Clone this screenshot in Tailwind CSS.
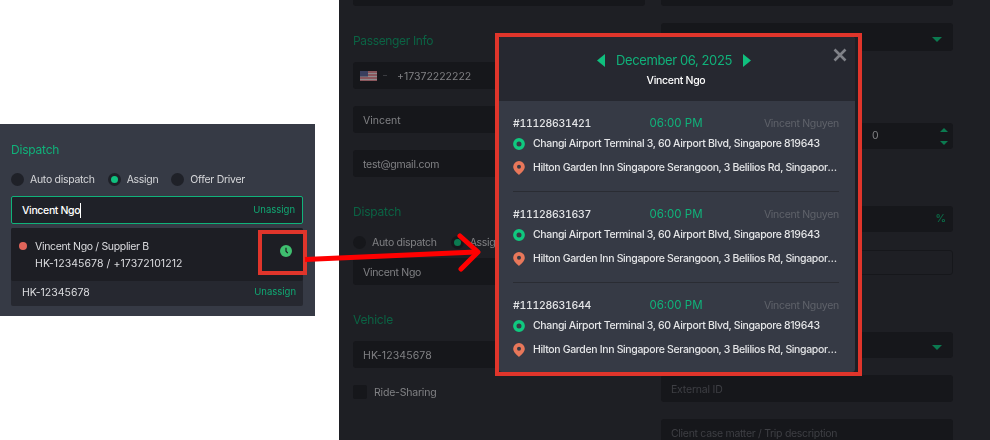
<!DOCTYPE html>
<html lang="en">
<head>
  <meta charset="UTF-8">
  <title>Dispatch assign</title>
  <script src="https://cdn.jsdelivr.net/npm/@tailwindcss/browser@4"></script>
</head>
<body class="bg-white font-['Inter',sans-serif]">
  <div class="relative flex h-[440px] w-[990px] overflow-hidden">

    <!-- Left: dispatch card -->
    <div class="w-[339px] shrink-0 pt-[124px]">
      <div class="h-[192px] w-[315px] bg-[#363a45] px-[11px] pt-[18px]">
        <h2 class="text-[12px] leading-[15px] tracking-[-0.2px] text-[#10b27a] blur-[0.3px]">Dispatch</h2>
        <div class="mt-[15px] flex h-[14px] items-center text-[10.5px] tracking-[-0.3px] text-[#d5d6d9]">
          <span class="h-[13px] w-[13px] rounded-full bg-[#1f2128]"></span>
          <span class="ml-[6px] mt-[2px] blur-[0.3px]">Auto dispatch</span>
          <span class="ml-[13px] flex h-[13px] w-[13px] items-center justify-center rounded-full bg-[#1f2128]"><span class="h-[7px] w-[7px] rounded-full bg-[#10c07e]"></span></span>
          <span class="ml-[6px] mt-[2px] blur-[0.3px]">Assign</span>
          <span class="ml-[13px] h-[13px] w-[13px] rounded-full bg-[#1f2128]"></span>
          <span class="ml-[6px] mt-[2px] blur-[0.3px]">Offer Driver</span>
        </div>
        <div class="mt-[10px] flex h-[28px] w-[292px] items-center justify-between rounded-[2px] border border-[#10b27a] bg-[#1f2128] pl-[10px] pr-[7px] text-[10.5px]">
          <span class="border-r border-white font-medium leading-[15px] tracking-[-0.35px] text-white">Vincent Ngo</span>
          <span class="text-[9.5px] text-[#10a873] blur-[0.3px]">Unassign</span>
        </div>
        <div class="mt-[4px] w-[292px] rounded-[2px] bg-[#262830]">
          <div class="flex h-[53px] items-center rounded-[2px] bg-[#1d1e24] pl-[8px] pr-[11px]">
            <span class="mb-[17px] h-[8px] w-[8px] rounded-full bg-[#e0655a]"></span>
            <div class="ml-[8px] flex-1 text-[10.5px] leading-[17px] text-[#dcdde0] blur-[0.3px]">
              <div class="tracking-[-0.33px]">Vincent Ngo / Supplier B</div>
              <div class="tracking-[0.08px]">HK-12345678 / +17372101212</div>
            </div>
            <svg class="mb-[7px]" width="12" height="12" viewBox="0 0 12 12"><circle cx="6" cy="6" r="6" fill="#3fbf6f"/><path d="M6 2.8V6.2L7.8 8.2" fill="none" stroke="#1d1e24" stroke-width="1.2"/></svg>
          </div>
          <div class="flex h-[23px] items-center justify-between pl-[11px] pr-[7px] text-[10.5px]">
            <span class="text-[#dcdde0] blur-[0.3px]">HK-12345678</span>
            <span class="text-[9.5px] text-[#10a873] blur-[0.3px]">Unassign</span>
          </div>
          <div class="h-[2px]"></div>
        </div>
      </div>
    </div>

    <!-- Right: dimmed booking form -->
    <div class="grid h-[440px] flex-1 grid-cols-[292px_292px] gap-x-[16px] bg-[#1e1f24] pl-[14px] text-[10.5px] text-[#808184]">
      <div>
        <div class="h-[6px] rounded-b-[3px] bg-[#16171b]"></div>
        <h3 class="mt-[27px] text-[12px] leading-[15px] tracking-[-0.35px] text-[#0b6344] blur-[0.4px]">Passenger Info</h3>
        <div class="mt-[14px] flex h-[27px] items-center rounded-[3px] bg-[#16171b] pl-[7px] pt-[2px]">
          <svg class="mb-[2px] blur-[0.4px]" width="17" height="10" viewBox="0 0 17 10"><rect width="17" height="10" fill="#8a565c"/><path d="M0 2.5H17M0 5.5H17M0 8.5H17" stroke="#8f8a8d" stroke-width="1"/><rect width="8" height="5.5" fill="#3a3f5e"/></svg>
          <span class="ml-[6px] mb-[2px] h-[1px] w-[4px] bg-[#3a3b40]"></span>
          <span class="ml-[10px] blur-[0.4px]">+17372222222</span>
        </div>
        <div class="mt-[17px] flex h-[27px] items-center rounded-[3px] bg-[#16171b] pl-[10px] pt-[2px]"><span class="blur-[0.4px]">Vincent</span></div>
        <div class="mt-[17px] flex h-[27px] items-center rounded-[3px] bg-[#16171b] pl-[10px] pt-[2px]"><span class="tracking-[-0.25px] blur-[0.4px]">test@gmail.com</span></div>
        <h3 class="mt-[27px] text-[12px] leading-[15px] tracking-[-0.2px] text-[#0b6344] blur-[0.4px]">Dispatch</h3>
        <div class="mt-[16px] flex h-[14px] items-center tracking-[-0.3px]">
          <span class="h-[13px] w-[13px] rounded-full bg-[#16171b]"></span>
          <span class="ml-[6px] mt-[2px] blur-[0.4px]">Auto dispatch</span>
          <span class="ml-[14px] flex h-[13px] w-[13px] items-center justify-center rounded-full bg-[#16171b]"><span class="h-[7px] w-[7px] rounded-full bg-[#0b7a50]"></span></span>
          <span class="ml-[6px] mt-[2px] blur-[0.4px]">Assign</span>
        </div>
        <div class="mt-[9px] flex h-[27px] items-center rounded-[3px] bg-[#16171b] pl-[10px] pt-[2px]"><span class="tracking-[-0.3px] blur-[0.4px]">Vincent Ngo</span></div>
        <h3 class="mt-[27px] text-[12px] leading-[15px] tracking-[-0.2px] text-[#0b6344] blur-[0.4px]">Vehicle</h3>
        <div class="mt-[14px] flex h-[27px] items-center rounded-[3px] bg-[#16171b] pl-[10px] pt-[2px]"><span class="tracking-[0.1px] blur-[0.4px]">HK-12345678</span></div>
        <div class="mt-[17px] flex h-[14px] items-center">
          <span class="h-[14px] w-[14px] rounded-[2px] bg-[#16171b]"></span>
          <span class="ml-[7px] mt-[2px] tracking-[-0.2px] blur-[0.4px]">Ride-Sharing</span>
        </div>
      </div>
      <div>
        <div class="h-[6px] rounded-b-[3px] bg-[#16171b]"></div>
        <div class="mt-[17px] flex h-[28px] items-center justify-end rounded-[3px] bg-[#16171b] pr-[11px] pt-[4px]">
          <span class="h-0 w-0 border-x-[5px] border-t-[5px] border-x-transparent border-t-[#0b7a50]"></span>
        </div>
        <div class="mt-[72px] flex h-[26px] items-center justify-between rounded-[3px] bg-[#16171b] pl-[211px] pr-[5px]">
          <span class="blur-[0.4px]">0</span>
          <span class="flex flex-col gap-[9px]">
            <span class="h-0 w-0 border-x-[4px] border-b-[4px] border-x-transparent border-b-[#0b7a50]"></span>
            <span class="h-0 w-0 border-x-[4px] border-t-[4px] border-x-transparent border-t-[#0b7a50]"></span>
          </span>
        </div>
        <div class="mt-[57px] flex h-[26px] items-center justify-end rounded-[3px] bg-[#16171b] pr-[7px] font-semibold text-[#0b6b47]"><span class="blur-[0.4px]">%</span></div>
        <div class="mt-[18px] h-[25px] rounded-[3px] border border-[#16171b]"></div>
        <div class="mt-[57px] flex h-[26px] items-center justify-end rounded-[3px] bg-[#16171b] pr-[11px] pt-[4px]">
          <span class="h-0 w-0 border-x-[5px] border-t-[5px] border-x-transparent border-t-[#0b7a50]"></span>
        </div>
        <div class="mt-[17px] flex h-[27px] items-center rounded-[3px] bg-[#16171b] pl-[10px] pt-[2px] text-[#3e3f44]"><span class="tracking-[-0.2px] blur-[0.4px]">External ID</span></div>
        <div class="mt-[17px] flex h-[27px] items-center rounded-[3px] bg-[#16171b] pl-[10px] pt-[2px] text-[#3e3f44]"><span class="tracking-[-0.3px] blur-[0.4px]">Client case matter / Trip description</span></div>
      </div>
    </div>

    <!-- Highlight around the clock icon -->
    <div class="absolute left-[258px] top-[230px] h-[45px] w-[49px] border-[4px] border-[#e0352b]"></div>

    <!-- Arrow -->
    <svg class="absolute left-0 top-0" width="990" height="440" viewBox="0 0 990 440" fill="none">
      <path d="M305 259.5L476 252" stroke="#ff0000" stroke-width="5"/>
      <path d="M460 236L478 252L461 269" stroke="#ff0000" stroke-width="5" stroke-linecap="round" stroke-linejoin="round"/>
    </svg>

    <!-- Schedule popup -->
    <div class="absolute left-[495px] top-[33px] h-[343px] w-[367px] border-[4px] border-[#e0352b] bg-[#1e1f24]">
      <div class="h-[335px] w-[356px] overflow-hidden rounded-[3px] bg-[#363a45]">
        <div class="relative h-[64px] bg-[#262830] pt-[14px] text-center">
          <div class="flex items-center justify-center gap-[11px] pr-[6px]">
            <svg width="8" height="13" viewBox="0 0 8 13"><path d="M8 0V13L0 6.5Z" fill="#10c07e"/></svg>
            <span class="text-[13px] leading-[18px] tracking-[-0.4px] text-[#10b27a] blur-[0.3px]">December 06, 2025</span>
            <svg width="8" height="13" viewBox="0 0 8 13"><path d="M0 0V13L8 6.5Z" fill="#10c07e"/></svg>
          </div>
          <div class="mt-[4px] pr-[2px] text-[10.5px] font-medium leading-[15px] tracking-[-0.3px] text-white blur-[0.3px]">Vincent Ngo</div>
          <svg class="absolute right-[8px] top-[11px]" width="14" height="14" viewBox="0 0 14 14"><path d="M1.5 1.5L12.5 12.5M12.5 1.5L1.5 12.5" stroke="#7f8187" stroke-width="2.6"/></svg>
        </div>

        <div class="pl-[14px] pr-[16px] pt-[14px]">
          <!-- Trip 1 -->
          <div class="border-b border-[#2a2c33] pb-[15px]">
            <div class="grid h-[16px] grid-cols-3 items-center text-[10.5px] blur-[0.3px]">
              <span class="font-medium tabular-nums tracking-[-0.3px] text-[#e4e5e7]">#11128631421</span>
              <span class="text-center text-[11.5px] text-[#10b27a]">06:00 PM</span>
              <span class="text-right tracking-[-0.3px] text-[#5f626a]">Vincent Nguyen</span>
            </div>
            <div class="mt-[5px] flex h-[16px] items-center text-[10.5px] font-medium tracking-[-0.35px] text-[#e4e5e7]">
              <svg class="shrink-0" width="12" height="12" viewBox="0 0 12 12"><circle cx="6" cy="6" r="4.2" fill="none" stroke="#10c97f" stroke-width="3.4"/></svg>
              <span class="ml-[8px] truncate blur-[0.3px]">Changi Airport Terminal 3, 60 Airport Blvd, Singapore 819643</span>
            </div>
            <div class="mt-[8px] flex h-[16px] items-center text-[10.5px] font-medium tracking-[-0.35px] text-[#e4e5e7]">
              <svg class="shrink-0" width="12" height="14" viewBox="0 0 12 14"><path fill-rule="evenodd" d="M6 0A5.8 5.8 0 0 1 11.8 5.8C11.8 9 8.5 11.8 6 14C3.5 11.8 .2 9 .2 5.8A5.8 5.8 0 0 1 6 0ZM6 3.8A2 2 0 1 0 6 7.8A2 2 0 1 0 6 3.8Z" fill="#e8775a"/></svg>
              <span class="ml-[8px] truncate blur-[0.3px]">Hilton Garden Inn Singapore Serangoon, 3 Belilios Rd, Singapore 328041</span>
            </div>
          </div>
          <!-- Trip 2 -->
          <div class="border-b border-[#2a2c33] pb-[15px] pt-[14px]">
            <div class="grid h-[16px] grid-cols-3 items-center text-[10.5px] blur-[0.3px]">
              <span class="font-medium tabular-nums tracking-[-0.3px] text-[#e4e5e7]">#11128631637</span>
              <span class="text-center text-[11.5px] text-[#10b27a]">06:00 PM</span>
              <span class="text-right tracking-[-0.3px] text-[#5f626a]">Vincent Nguyen</span>
            </div>
            <div class="mt-[5px] flex h-[16px] items-center text-[10.5px] font-medium tracking-[-0.35px] text-[#e4e5e7]">
              <svg class="shrink-0" width="12" height="12" viewBox="0 0 12 12"><circle cx="6" cy="6" r="4.2" fill="none" stroke="#10c97f" stroke-width="3.4"/></svg>
              <span class="ml-[8px] truncate blur-[0.3px]">Changi Airport Terminal 3, 60 Airport Blvd, Singapore 819643</span>
            </div>
            <div class="mt-[8px] flex h-[16px] items-center text-[10.5px] font-medium tracking-[-0.35px] text-[#e4e5e7]">
              <svg class="shrink-0" width="12" height="14" viewBox="0 0 12 14"><path fill-rule="evenodd" d="M6 0A5.8 5.8 0 0 1 11.8 5.8C11.8 9 8.5 11.8 6 14C3.5 11.8 .2 9 .2 5.8A5.8 5.8 0 0 1 6 0ZM6 3.8A2 2 0 1 0 6 7.8A2 2 0 1 0 6 3.8Z" fill="#e8775a"/></svg>
              <span class="ml-[8px] truncate blur-[0.3px]">Hilton Garden Inn Singapore Serangoon, 3 Belilios Rd, Singapore 328041</span>
            </div>
          </div>
          <!-- Trip 3 -->
          <div class="pt-[14px]">
            <div class="grid h-[16px] grid-cols-3 items-center text-[10.5px] blur-[0.3px]">
              <span class="font-medium tabular-nums tracking-[-0.3px] text-[#e4e5e7]">#11128631644</span>
              <span class="text-center text-[11.5px] text-[#10b27a]">06:00 PM</span>
              <span class="text-right tracking-[-0.3px] text-[#5f626a]">Vincent Nguyen</span>
            </div>
            <div class="mt-[5px] flex h-[16px] items-center text-[10.5px] font-medium tracking-[-0.35px] text-[#e4e5e7]">
              <svg class="shrink-0" width="12" height="12" viewBox="0 0 12 12"><circle cx="6" cy="6" r="4.2" fill="none" stroke="#10c97f" stroke-width="3.4"/></svg>
              <span class="ml-[8px] truncate blur-[0.3px]">Changi Airport Terminal 3, 60 Airport Blvd, Singapore 819643</span>
            </div>
            <div class="mt-[8px] flex h-[16px] items-center text-[10.5px] font-medium tracking-[-0.35px] text-[#e4e5e7]">
              <svg class="shrink-0" width="12" height="14" viewBox="0 0 12 14"><path fill-rule="evenodd" d="M6 0A5.8 5.8 0 0 1 11.8 5.8C11.8 9 8.5 11.8 6 14C3.5 11.8 .2 9 .2 5.8A5.8 5.8 0 0 1 6 0ZM6 3.8A2 2 0 1 0 6 7.8A2 2 0 1 0 6 3.8Z" fill="#e8775a"/></svg>
              <span class="ml-[8px] truncate blur-[0.3px]">Hilton Garden Inn Singapore Serangoon, 3 Belilios Rd, Singapore 328041</span>
            </div>
          </div>
        </div>
      </div>
    </div>
  </div>
</body>
</html>
